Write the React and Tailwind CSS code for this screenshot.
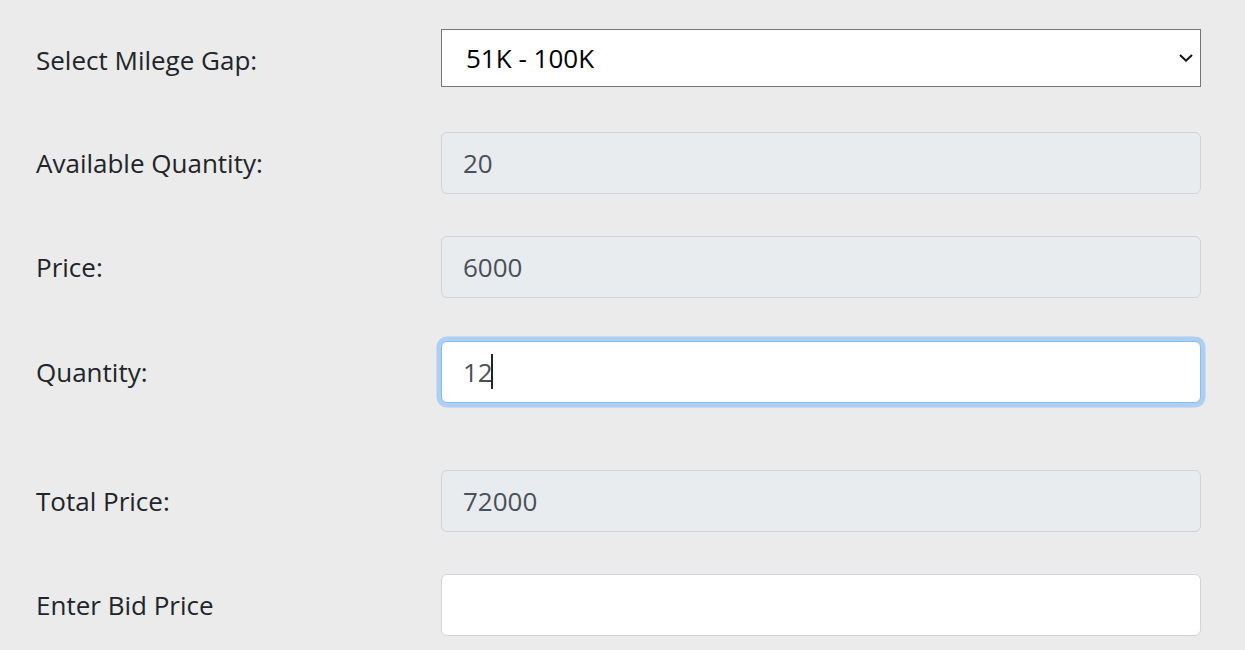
import React, { useState } from 'react';

const font = { fontFamily: '"Open Sans", "Noto Sans", sans-serif' };

const Row = ({ label, className = '', labelClass = '', children }) => (
    <div className={`flex items-center ${className}`}>
        <label className={`w-[405px] shrink-0 text-[26px] text-[#212529] ${labelClass}`}>{label}</label>
        <div className="w-[760px]">{children}</div>
    </div>
);

const ReadOnly = ({ value }) => (
    <input
        type="text"
        value={value}
        readOnly
        className="w-full h-[62px] px-[21px] bg-[#e9ecef] border border-[#ced4da] rounded-[6px] text-[26px] text-[#495057] outline-none"
    />
);

const App = () => {
    const [gap, setGap] = useState('51-100');
    const [qty, setQty] = useState('12');
    const [bid, setBid] = useState('');

    const price = 6000;

    return (
        <div className="min-h-[650px] bg-[#ebebeb] pl-[36px] pt-[29px]" style={font}>
            <Row label="Select Milege Gap:" labelClass="pt-[4px]">
                <div className="relative">
                    <select
                        value={gap}
                        onChange={(e) => setGap(e.target.value)}
                        className="w-full h-[58px] pl-[24px] pr-10 appearance-none bg-white border border-[#767676] text-[26px] text-black outline-none"
                    >
                        <option value="0-50">0 - 50K</option>
                        <option value="51-100">51K - 100K</option>
                        <option value="101-150">101K - 150K</option>
                    </select>
                    <svg
                        className="absolute right-[8px] top-1/2 -translate-y-1/2 pointer-events-none"
                        width="14"
                        height="9"
                        viewBox="0 0 14 9"
                        fill="none"
                    >
                        <path d="M1 1.5 L7 7.2 L13 1.5" stroke="#111" strokeWidth="2" />
                    </svg>
                </div>
            </Row>

            <Row label="Available Quantity:" className="mt-[45px]">
                <ReadOnly value="20" />
            </Row>

            <Row label="Price:" className="mt-[42px]">
                <ReadOnly value={String(price)} />
            </Row>

            <Row label="Quantity:" className="mt-[43px]">
                <div className="relative">
                    <input
                        type="text"
                        value={qty}
                        onChange={(e) => setQty(e.target.value)}
                        className="w-full h-[62px] px-[21px] bg-white border border-[#80bdff] rounded-[6px] text-[26px] text-[#495057] caret-transparent outline-none shadow-[0_0_0_4.5px_rgba(0,123,255,0.25)]"
                    />
                    {/* caret */}
                    <span className="absolute left-[50px] top-[13px] w-[1.5px] h-[35px] bg-[#212529] pointer-events-none" />
                </div>
            </Row>

            <Row label="Total Price:" className="mt-[67px]">
                <ReadOnly value={String((Number(qty) || 0) * price)} />
            </Row>

            <Row label="Enter Bid Price" className="mt-[42px]">
                <input
                    type="text"
                    value={bid}
                    onChange={(e) => setBid(e.target.value)}
                    className="w-full h-[62px] px-[21px] bg-white border border-[#ced4da] rounded-[6px] text-[26px] text-[#495057] outline-none"
                />
            </Row>
        </div>
    );
};

export default App;
